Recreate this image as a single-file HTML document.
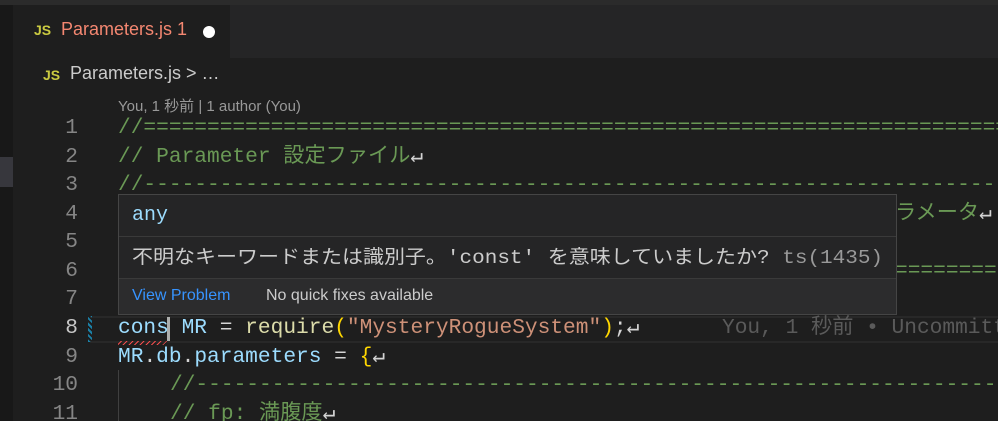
<!DOCTYPE html>
<html style="overflow:hidden"><head><meta charset="utf-8"><style>
*{margin:0;padding:0;box-sizing:border-box}
html,body{width:998px;height:421px;overflow:hidden}
body{background:#1e1e1e;font-family:"Liberation Sans","Noto Sans CJK JP",sans-serif}
#root{position:relative;width:998px;height:421px;overflow:hidden}
.abs{position:absolute;white-space:pre}
.mono{font-family:"Liberation Mono","Noto Sans CJK JP",monospace;font-size:21.2px;line-height:28px}
.ln{position:absolute;left:30px;width:48px;text-align:right;color:#858585}
.g{color:#6a9955}.b{color:#9cdcfe}.f{color:#dcdcaa}.s{color:#ce9178}.y{color:#ffd700}.w{color:#d4d4d4}.ret{color:#d4d4d4}
.clip{overflow:hidden;right:0}
</style></head><body><div id="root">
<div class="abs" style="left:0;top:0;width:998px;height:5px;background:#2b2b2b"></div>
<div class="abs" style="left:0;top:5px;width:13px;height:416px;background:#181818"></div>
<div class="abs" style="left:0;top:157px;width:13px;height:30px;background:#37373d"></div>
<div class="abs" style="left:13px;top:5px;width:985px;height:53px;background:#252526"></div>
<div class="abs" style="left:13px;top:5px;width:217px;height:53px;background:#1e1e1e"></div>
<div class="abs" style="left:34px;top:22px;font-size:14px;font-weight:bold;color:#cbcb41">JS</div>
<div class="abs" style="left:61px;top:19px;font-size:18px;color:#f48771">Parameters.js 1</div>
<div class="abs" style="left:203px;top:26px;width:12px;height:12px;border-radius:50%;background:#fff"></div>
<div class="abs" style="left:43px;top:67px;font-size:14px;font-weight:bold;color:#cbcb41">JS</div>
<div class="abs" style="left:70px;top:63px;font-size:18px;color:#cccccc">Parameters.js &gt; …</div>
<div class="abs" style="left:118px;top:95px;font-size:15px;color:#999">You, 1 秒前 | 1 author (You)</div>

<div class="abs" style="left:90px;top:316px;width:908px;height:27px;border-top:2px solid #282828;border-bottom:2px solid #282828"></div>
<div class="abs" style="left:88px;top:316px;width:4px;height:26px;background:repeating-linear-gradient(45deg,#1b81a8 0 2px,transparent 2px 4px)"></div>
<div class="abs" style="left:118px;top:370px;width:1px;height:51px;background:#404040"></div>

<div class="mono">
<div class="ln" style="top:114px">1</div>
<div class="ln" style="top:143px">2</div>
<div class="ln" style="top:171px">3</div>
<div class="ln" style="top:200px">4</div>
<div class="ln" style="top:228px">5</div>
<div class="ln" style="top:257px">6</div>
<div class="ln" style="top:285px">7</div>
<div class="ln" style="top:314px;color:#c6c6c6">8</div>
<div class="ln" style="top:343px">9</div>
<div class="ln" style="top:371px">10</div>
<div class="ln" style="top:400px">11</div>
<div class="abs g clip" style="left:118px;top:114px">//==========================================================================</div>
<div class="abs g" style="left:118px;top:143px">// Parameter 設定ファイル<span class="ret">↵</span></div>
<div class="abs g clip" style="left:118px;top:171px">//--------------------------------------------------------------------------</div>
<div class="abs g" style="left:895px;top:200px">ラメータ<span class="ret">↵</span></div>
<div class="abs g clip" style="left:895px;top:257px">========</div>
<div class="abs" style="left:118px;top:314px"><span class="b">cons</span><span class="w"> </span><span class="b">MR</span><span class="w"> = </span><span class="f">require</span><span class="y">(</span><span class="s">"MysteryRogueSystem"</span><span class="y">)</span><span class="w">;</span><span class="ret">↵</span></div>
<div class="abs clip" style="left:722px;top:314px;color:#5a5a5a">You, 1 秒前 • Uncommitted</div>
<div class="abs" style="left:118px;top:343px"><span class="b">MR</span><span class="w">.</span><span class="b">db</span><span class="w">.</span><span class="b">parameters</span><span class="w"> = </span><span class="y">{</span><span class="ret">↵</span></div>
<div class="abs g clip" style="left:170px;top:371px">//------------------------------------------------------------------------</div>
<div class="abs g" style="left:170px;top:400px;height:21px;overflow:hidden">// fp: 満腹度<span class="ret">↵</span></div>
</div>
<div class="abs" style="left:118px;top:341px;width:50px;height:4px;background:repeating-linear-gradient(135deg,transparent 0 2px,#f14c4c 2px 3px,transparent 3px 4px)"></div>
<div class="abs" style="left:167px;top:317px;width:3px;height:24px;background:#aeafad"></div>

<div class="abs" style="left:118px;top:194px;width:779px;height:121px;background:#252526;border:1px solid #454545;overflow:hidden">
  <div class="abs mono b" style="left:13px;top:7px;font-size:20px">any</div>
  <div class="abs" style="left:0;top:41px;width:777px;height:1px;background:#3a3a3a"></div>
  <div class="abs mono" style="left:13px;top:49px;font-size:19px;color:#cccccc;transform:scaleX(1.105);transform-origin:0 50%">不明なキーワードまたは識別子。'const' を意味していましたか? <span style="color:#999">ts(1435)</span></div>
  <div class="abs" style="left:0;top:83px;width:777px;height:36px;background:#2c2c2d;border-top:1px solid #3a3a3a"></div>
  <div class="abs" style="left:13px;top:92px;font-size:16px;color:#3794ff">View Problem</div>
  <div class="abs" style="left:147px;top:92px;font-size:16px;color:#cccccc">No quick fixes available</div>
</div>
</div></body></html>
